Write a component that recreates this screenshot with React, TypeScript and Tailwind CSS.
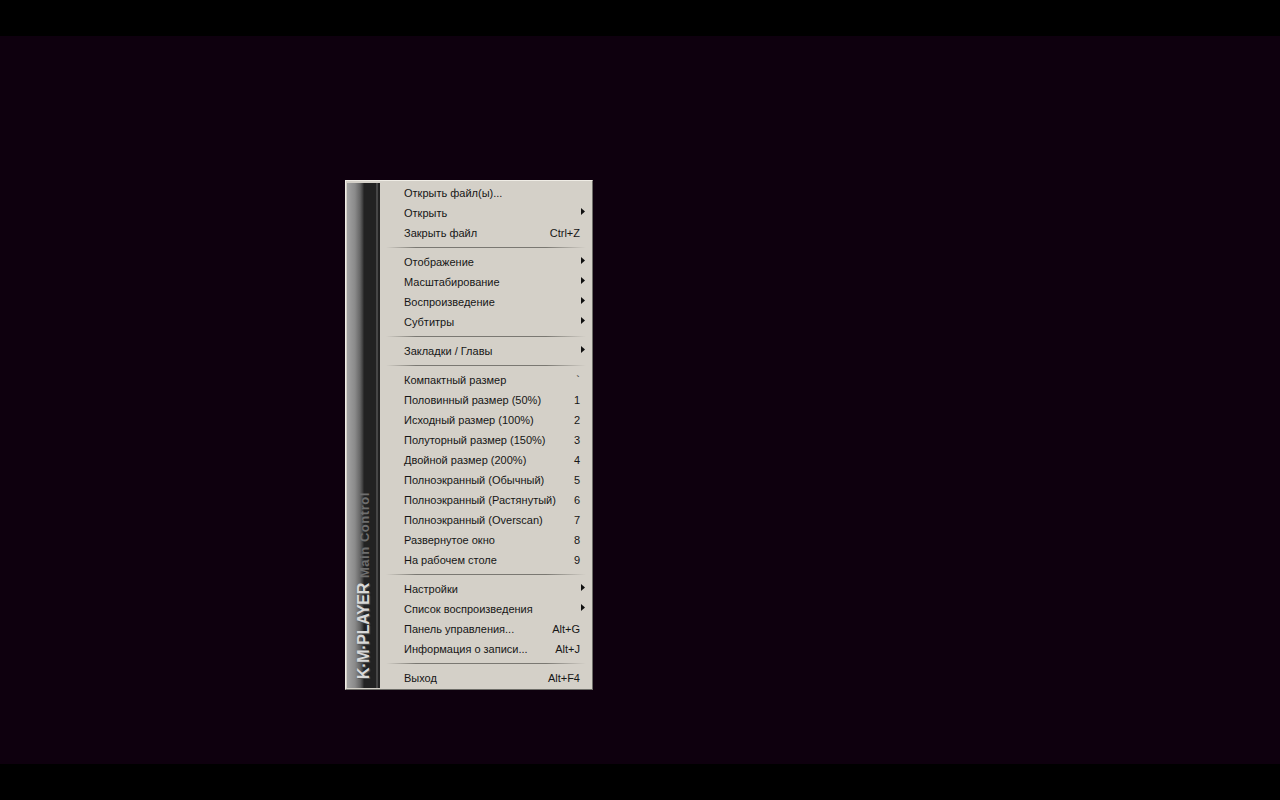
const F = "[font-family:'Liberation_Sans',sans-serif]";

type Row = { t: string; k?: string; a?: boolean } | "sep";
const rows: Row[] = [
  { t: "Открыть файл(ы)..." },
  { t: "Открыть", a: true },
  { t: "Закрыть файл", k: "Ctrl+Z" },
  "sep",
  { t: "Отображение", a: true },
  { t: "Масштабирование", a: true },
  { t: "Воспроизведение", a: true },
  { t: "Субтитры", a: true },
  "sep",
  { t: "Закладки / Главы", a: true },
  "sep",
  { t: "Компактный размер", k: "`" },
  { t: "Половинный размер (50%)", k: "1" },
  { t: "Исходный размер (100%)", k: "2" },
  { t: "Полуторный размер (150%)", k: "3" },
  { t: "Двойной размер (200%)", k: "4" },
  { t: "Полноэкранный (Обычный)", k: "5" },
  { t: "Полноэкранный (Растянутый)", k: "6" },
  { t: "Полноэкранный (Overscan)", k: "7" },
  { t: "Развернутое окно", k: "8" },
  { t: "На рабочем столе", k: "9" },
  "sep",
  { t: "Настройки", a: true },
  { t: "Список воспроизведения", a: true },
  { t: "Панель управления...", k: "Alt+G" },
  { t: "Информация о записи...", k: "Alt+J" },
  "sep",
  { t: "Выход", k: "Alt+F4" },
];

export default function App() {
  return (
    <div className={`relative flex h-[800px] w-[1280px] flex-col bg-black ${F}`}>
      <div className="h-9 bg-black" />
      <div className="flex-1 bg-[#0e000e]" />
      <div className="h-9 bg-black" />

      <div className="absolute left-[345px] top-[180px] flex h-[510px] w-[248px] border border-t-[#f0ede6] border-l-[#f0ede6] border-r-[#6e6d68] border-b-[#6e6d68] bg-[#d4d0c8] pt-[2px] pb-[1px] pl-[1px] pr-[1px]">
        <div className="relative flex h-full w-[33px] shrink-0 justify-end bg-[linear-gradient(to_right,#a0a0a0_1px,#8a8a8a_8px,#666666_13px,#3a3a3a_16px,#222222_17px,#222222_29px,#6a6a6a_30px,#222222_31px,#222222_33px)]">
          <div className="absolute bottom-[9px] left-[8px] flex flex-col items-center [writing-mode:vertical-rl] rotate-180">
            <span className="text-[16px] leading-[18px] font-bold tracking-[-0.3px] text-[#d8d8d8] [text-shadow:-1px_1px_1px_#555]">K·M·PLAYER</span>
          </div>
          <div className="absolute bottom-[110px] left-[11px] [writing-mode:vertical-rl] rotate-180 -translate-x-[5px]">
            <span className="text-[13px] leading-[14px] font-bold tracking-[0.55px] text-[#6e6e6e]">Main Control</span>
          </div>
        </div>
        <div className="flex min-w-0 flex-1 flex-col pl-[6px]">
          {rows.map((r, i) =>
            r === "sep" ? (
              <div key={i} className="flex h-[9px] items-center pr-[5px]">
                <div className="h-[1px] w-full bg-[linear-gradient(to_right,#d4d0c8,#7a7872_15%,#7a7872_80%,#d4d0c8)]" />
              </div>
            ) : (
              <div key={i} className="relative flex h-5 items-center justify-between pl-[18px] pr-[11px] text-[11px] text-[#161616]">
                <span className="whitespace-nowrap">{r.t}</span>
                {r.k && <span>{r.k}</span>}
                {r.a && (
                  <svg className="absolute right-[6px] top-[5px]" width="4" height="7" viewBox="0 0 4 7">
                    <path d="M0 0 L4 3.5 L0 7 Z" fill="#111" />
                  </svg>
                )}
              </div>
            ),
          )}
        </div>
      </div>
    </div>
  );
}
